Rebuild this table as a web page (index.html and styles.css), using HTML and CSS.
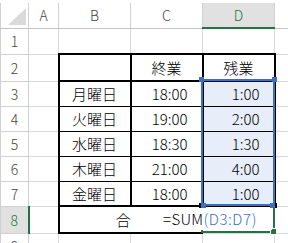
FILE: index.html
```html
<!DOCTYPE html>
<html lang="ja">
<head>
  <meta charset="UTF-8" />
  <title>Book1</title>
  <link rel="stylesheet" href="styles.css">
</head>
<body>

  <div class="sheet">
    <table class="grid">
      <colgroup>
        <col class="col-hd">
        <col class="col-a">
        <col class="col-b">
        <col class="col-c">
        <col class="col-d">
        <col class="col-e">
      </colgroup>
      <thead>
        <tr class="row-hd">
          <th class="corner">
            <svg width="28" height="24" viewBox="0 0 28 24"><polygon points="25,5 25,22 7,22" fill="#dadada"/></svg>
          </th>
          <th>A</th>
          <th>B</th>
          <th>C</th>
          <th class="on">D</th>
          <th></th>
        </tr>
      </thead>
      <tbody>
        <tr class="r26"><th>1</th><td></td><td></td><td></td><td></td><td></td></tr>
        <tr class="r27">
          <th>2</th><td></td>
          <td class="bt bl br bb"></td>
          <td class="bt br bb mid">終業</td>
          <td class="bt br bb mid">残業</td>
          <td></td>
        </tr>
        <tr class="r25">
          <th>3</th><td></td>
          <td class="bl br tb mid">月曜日</td>
          <td class="br tb num">18:00</td>
          <td class="br tb num sel">1:00</td>
          <td></td>
        </tr>
        <tr class="r25">
          <th>4</th><td></td>
          <td class="bl br tb mid">火曜日</td>
          <td class="br tb num">19:00</td>
          <td class="br tb num sel">2:00</td>
          <td></td>
        </tr>
        <tr class="r25">
          <th>5</th><td></td>
          <td class="bl br tb mid">水曜日</td>
          <td class="br tb num">18:30</td>
          <td class="br tb num sel">1:30</td>
          <td></td>
        </tr>
        <tr class="r25">
          <th>6</th><td></td>
          <td class="bl br tb mid">木曜日</td>
          <td class="br tb num">21:00</td>
          <td class="br tb num sel">4:00</td>
          <td></td>
        </tr>
        <tr class="r25">
          <th>7</th><td></td>
          <td class="bl br bb mid">金曜日</td>
          <td class="br bb num">18:00</td>
          <td class="br bb num sel">1:00</td>
          <td></td>
        </tr>
        <tr class="r27">
          <th class="on">8</th><td></td>
          <td class="bl bb mid" colspan="2">合計</td>
          <td></td>
          <td></td>
        </tr>
        <tr class="r25"><th>9</th><td></td><td></td><td></td><td></td><td></td></tr>
      </tbody>
    </table>

    <!-- active cell D8 -->
    <div class="active"><i class="fill"></i></div>

    <!-- in-cell editor -->
    <div class="editor">=SUM<span class="ref">(D3:D7)</span></div>

    <!-- referenced range D3:D7 -->
    <div class="range">
      <i class="h tl"></i><i class="h tr"></i><i class="h bl"></i><i class="h br"></i>
    </div>
  </div>

</body>
</html>
```

FILE: styles.css
```css
body {
  margin: 0;
  background: #fff;
  overflow: hidden;
  font-family: "Noto Sans CJK JP", "Noto Sans", sans-serif;
  font-weight: 300;
  color: #000;
}

.sheet {
  position: relative;
  padding-top: 3px;
}

.grid {
  border-collapse: collapse;
  table-layout: fixed;
  width: 314px;
}

.col-hd { width: 28px; }
.col-a { width: 30px; }
.col-b { width: 72px; }
.col-c { width: 72px; }
.col-d { width: 72px; }
.col-e { width: 40px; }

th, td {
  border: 1px solid #dadada;
  padding: 0;
  font-size: 15px;
  font-weight: 300;
  line-height: 1;
  white-space: nowrap;
  overflow: hidden;
}

/* headers */
th {
  color: #444;
  font-size: 14px;
  text-align: center;
  border-color: #d0d0d0;
}

.row-hd th {
  height: 24px;
  border-top: none;
  border-bottom-color: #c4c4c4;
}

.corner svg {
  display: block;
}

th.on {
  background: #e1e1e1;
  color: #217346;
}

.row-hd th.on {
  border-bottom: 2px solid #217346;
}

tbody th.on {
  border-right: 2px solid #217346;
}

.r25 { height: 25px; }
.r26 { height: 26px; }
.r27 { height: 27px; }

/* table borders */
.bt { border-top: 2px solid #000; }
.bb { border-bottom: 2px solid #000; }
.bl { border-left: 2px solid #000; }
.br { border-right: 2px solid #000; }
.tb { border-bottom: 1px solid #000; }

.mid { text-align: center; }

.num {
  text-align: right;
  padding-right: 14px;
}

.sel {
  background: #e8eef9;
}

/* overlays */
.active {
  position: absolute;
  left: 201px;
  top: 204px;
  width: 74px;
  height: 29px;
  box-sizing: border-box;
  border: 2px solid #217346;
}

.active .fill {
  position: absolute;
  right: -4px;
  bottom: -4px;
  width: 5px;
  height: 5px;
  background: #217346;
  border: 1px solid #fff;
}

.editor {
  position: absolute;
  left: 131px;
  top: 207px;
  width: 141px;
  height: 23px;
  box-sizing: border-box;
  padding-right: 15px;
  background: #fff;
  text-align: right;
  font-size: 15px;
  line-height: 23px;
  letter-spacing: 0.3px;
  white-space: nowrap;
}

.editor .ref {
  color: #3b6fc6;
  letter-spacing: 0.6px;
}

.range {
  position: absolute;
  left: 201px;
  top: 79px;
  width: 74px;
  height: 127px;
  box-sizing: border-box;
  border: 2px solid #3b6fc6;
}

.range .h {
  position: absolute;
  width: 5px;
  height: 5px;
  background: #3b6fc6;
}

.h.tl { left: -4px; top: -4px; }
.h.tr { right: -4px; top: -4px; }
.h.bl { left: -4px; bottom: -4px; }
.h.br { right: -4px; bottom: -4px; }
```
